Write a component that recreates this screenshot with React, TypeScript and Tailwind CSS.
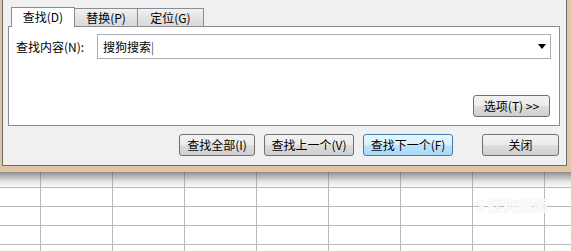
const tabs = [
  { label: "查找(D)", active: true, w: "w-[64px]" },
  { label: "替换(P)", active: false, w: "w-[64px]" },
  { label: "定位(G)", active: false, w: "w-[67px]" },
];

const Btn = ({ label, w, primary }: { label: string; w: string; primary?: boolean }) => (
  <button
    className={`${w} h-[22px] rounded-[3px] border flex items-center justify-center leading-none ${
      primary
        ? "border-[#3c7fb1] bg-[linear-gradient(#eaf6fd_0%,#d9f0fc_50%,#bee6fd_51%,#a7d9f5_100%)]"
        : "border-[#707070] bg-[linear-gradient(#f2f2f2_0%,#ebebeb_50%,#dddddd_51%,#cfcfcf_100%)]"
    }`}
  >
    {label}
  </button>
);

export default function App() {
  const cols = [41, 72, 72, 72, 72, 72, 72, 72, 30];
  const rows = [16, 19, 19, 19, 19];

  return (
    <div className="w-[571px] h-[251px] overflow-hidden bg-white relative font-['Noto_Sans_CJK_SC',sans-serif] text-[12px] text-black">
      {/* dialog with its frame */}
      <div className="h-[172px] bg-[#e2c3a5] pl-[2px] pr-[4px] pb-[6px]">
        <div className="h-[166px] bg-[#f0f0f0] border-l border-r border-b border-[#6b6b6b] pl-[5px] pr-[6px] flex flex-col">
          {/* tabs */}
          <div className="flex items-end h-[26px] pl-[3px]">
            {tabs.map((t, i) => (
              <div
                key={t.label}
                className={`${t.w} ${i > 0 ? "-ml-px" : ""} flex items-center justify-center border border-b-0 border-[#898c95] ${
                  t.active
                    ? "h-[20px] bg-white relative z-10 mb-[-1px] pb-[1px]"
                    : "h-[18px] bg-[linear-gradient(#f3f3f3,#e3e3e3_50%,#d9d9d9)]"
                }`}
              >
                {t.label}
              </div>
            ))}
          </div>
          {/* panel */}
          <div className="h-[100px] border border-[#898c95] bg-white pl-[7px] pr-[8px] pt-[7px] flex flex-col">
            <div className="flex items-center">
              <span className="w-[81px]">查找内容(N):</span>
              <div className="flex-1 h-[25px] border border-[#abadb3] bg-white flex items-center pl-[5px] pr-[4px]">
                <span className="flex-1">
                  搜狗搜索<span className="font-light">|</span>
                </span>
                <svg width="8" height="5" viewBox="0 0 8 5">
                  <path d="M0 0h8L4 5z" fill="#000" />
                </svg>
              </div>
            </div>
            <div className="flex justify-end mt-[36px] pr-px">
              <Btn label="选项(T) >>" w="w-[77px]" />
            </div>
          </div>
          {/* bottom buttons */}
          <div className="flex items-center justify-end mt-[8px] pr-[1px]">
            <div className="flex gap-[9px]">
              <Btn label="查找全部(I)" w="w-[76px]" />
              <Btn label="查找上一个(V)" w="w-[90px]" />
              <Btn label="查找下一个(F)" w="w-[90px]" primary />
            </div>
            <div className="ml-[29px]">
              <Btn label="关闭" w="w-[77px]" />
            </div>
          </div>
        </div>
      </div>

      {/* spreadsheet grid */}
      <div className="relative">
        {rows.map((h, r) => (
          <div key={r} className="flex border-b border-[#b8b8b8]" style={{ height: h }}>
            {cols.map((w, c) => (
              <div
                key={c}
                className="shrink-0 border-r border-[#b8b8b8]"
                style={{ width: w }}
              />
            ))}
          </div>
        ))}
        <div className="absolute left-0 top-0 w-full h-[16px] bg-[linear-gradient(rgba(80,80,80,0.65),rgba(150,150,150,0.25)_60%,rgba(255,255,255,0))]" />
        <div className="absolute left-[475px] top-[22px] text-[15px] font-bold text-[#fafafa] [text-shadow:0_0_1px_#e6e6e6]">
          S 搜狗指南
        </div>
      </div>
    </div>
  );
}
